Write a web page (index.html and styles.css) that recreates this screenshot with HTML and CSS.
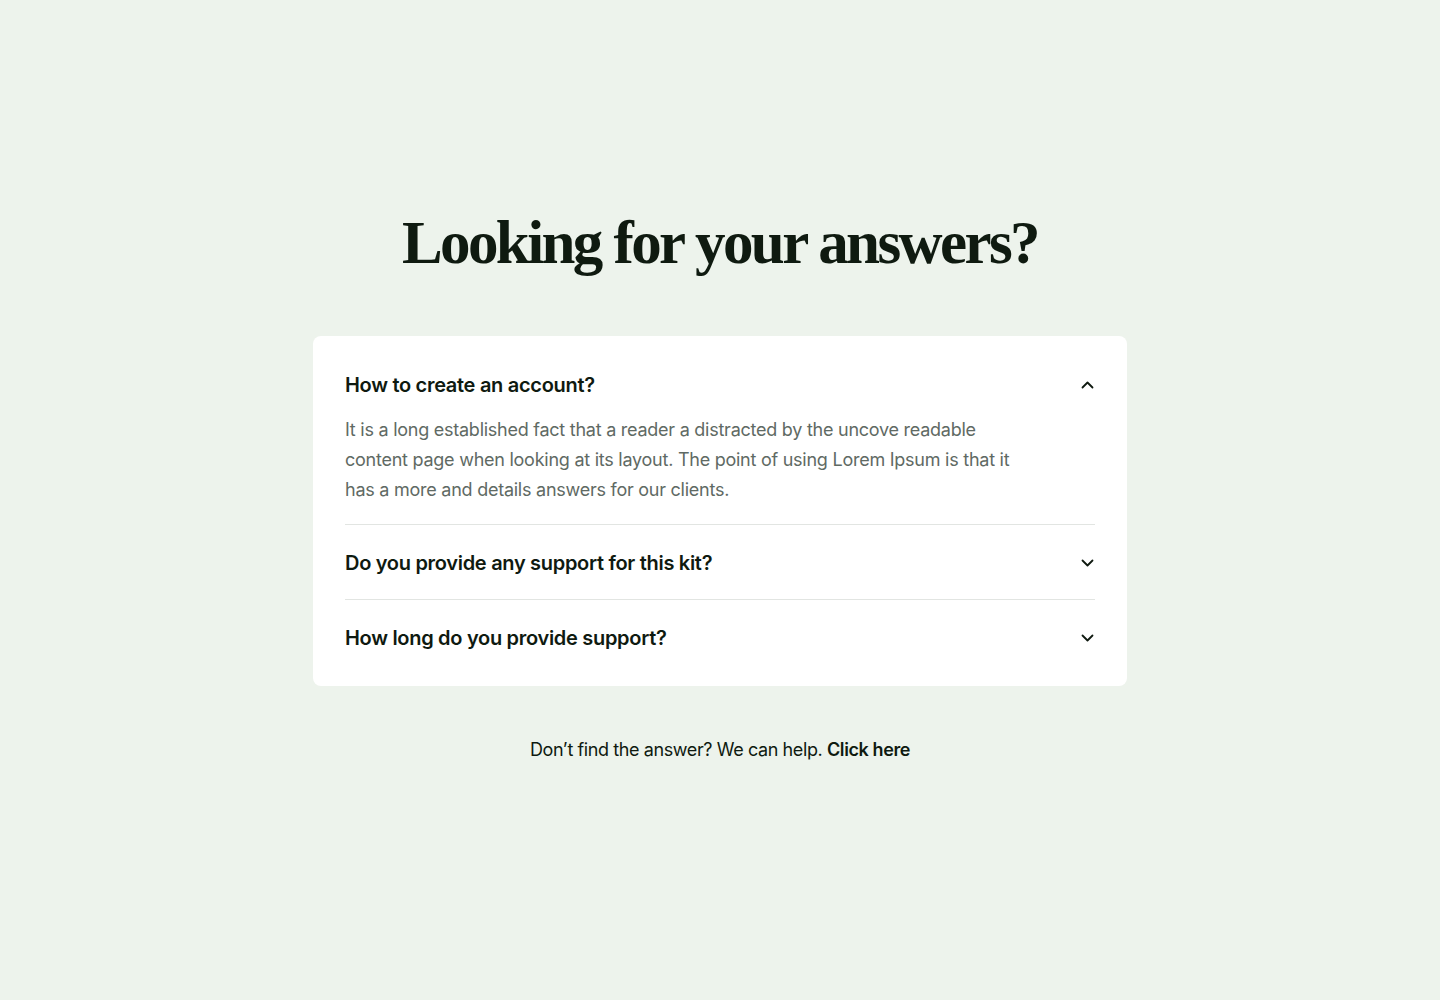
FILE: index.html
```html
<!DOCTYPE html>
<html lang="en">
<head>
<meta charset="utf-8">
<title>FAQ</title>
<link rel="stylesheet" href="styles.css">
</head>
<body>
<main class="page">
  <h1 class="title">Looking for your answers?</h1>
  <section class="card">
    <div class="item open">
      <div class="question">
        <span>How to create an account?</span>
        <svg class="chev" width="14" height="14" viewBox="0 0 14 14"><path d="M1.5 9.5 L6.5 4.5 L11.5 9.5" fill="none" stroke="#0f1a10" stroke-width="1.8" stroke-linecap="round" stroke-linejoin="round"/></svg>
      </div>
      <p class="answer">It is a long established fact that a reader a distracted by the uncove readable content page when looking at its layout. The point of using Lorem Ipsum is that it has a more and details answers for our clients.</p>
    </div>
    <div class="item">
      <div class="question">
        <span>Do you provide any support for this kit?</span>
        <svg class="chev" width="14" height="14" viewBox="0 0 14 14"><path d="M1.5 4.5 L6.5 9.5 L11.5 4.5" fill="none" stroke="#0f1a10" stroke-width="1.8" stroke-linecap="round" stroke-linejoin="round"/></svg>
      </div>
    </div>
    <div class="item last">
      <div class="question">
        <span>How long do you provide support?</span>
        <svg class="chev" width="14" height="14" viewBox="0 0 14 14"><path d="M1.5 4.5 L6.5 9.5 L11.5 4.5" fill="none" stroke="#0f1a10" stroke-width="1.8" stroke-linecap="round" stroke-linejoin="round"/></svg>
      </div>
    </div>
  </section>
  <p class="help">Don’t find the answer? We can help. <a class="link" href="#">Click here</a></p>
</main>
</body>
</html>
```

FILE: styles.css
```css
* { box-sizing: border-box; }
html, body { margin: 0; padding: 0; }
body {
  background: #edf3ec;
  font-family: Inter, "Noto Sans", sans-serif;
  color: #0f1a10;
  min-height: 1000px;
}
.page {
  display: flex;
  flex-direction: column;
  align-items: center;
  padding-top: 203px;
}
.title {
  margin: 0;
  font-family: "Liberation Serif", "DejaVu Serif", serif;
  font-weight: 700;
  font-size: 61px;
  line-height: 80px;
  letter-spacing: -2.6px;
  color: #0f1a10;
}
.card {
  margin-top: 53px;
  width: 814px;
  background: #ffffff;
  border-radius: 8px;
  padding: 11px 32px;
}
.item {
  padding: 23px 0 21px;
  border-bottom: 1px solid #e2e5e2;
}
.item.open { padding-bottom: 19px; }
.item.last { border-bottom: none; padding-bottom: 22px; }
.question {
  display: flex;
  justify-content: space-between;
  align-items: center;
  font-size: 20px;
  font-weight: 600;
  line-height: 30px;
  letter-spacing: -0.3px;
  color: #0f1a10;
}
.chev { flex: none; }
.answer {
  margin: 15px 0 0;
  max-width: 680px;
  font-size: 18px;
  line-height: 30px;
  letter-spacing: -0.25px;
  color: #5f6a64;
}
.help {
  margin: 49px 0 0;
  font-size: 18px;
  line-height: 30px;
  letter-spacing: -0.4px;
  color: #0f1a10;
}
.link {
  color: #0f1a10;
  font-weight: 600;
  text-decoration: none;
}
```
